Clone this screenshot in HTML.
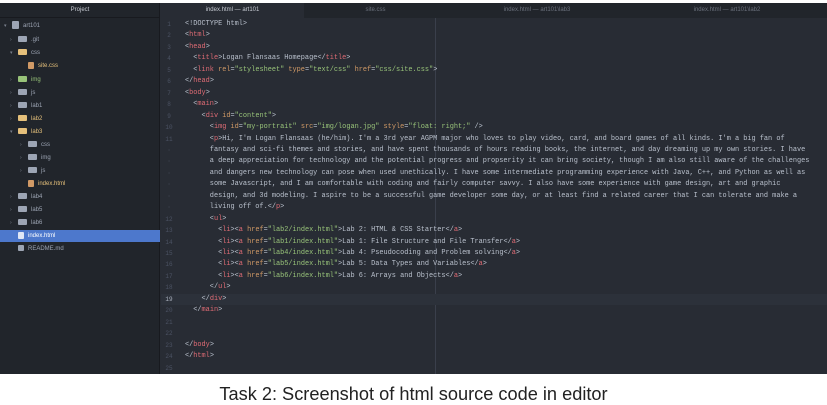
<!DOCTYPE html>
<html><head><meta charset="utf-8"><style>
*{margin:0;padding:0;box-sizing:border-box}
body{width:827px;height:404px;background:#fff;position:relative;overflow:hidden;font-family:"Liberation Sans",sans-serif}
#app{position:absolute;left:0;top:3px;width:827px;height:371px;background:#282c34}
#side{position:absolute;left:0;top:0;width:160px;height:371px;background:#21252b;border-right:1px solid #181a1f}
#tabs{position:absolute;left:161px;top:0;right:0;height:15px;background:#21252b}
.tab{position:absolute;top:0;height:15px;font-size:6px;color:#6b717d;text-align:center;line-height:15px}
.tab.a{background:#282c34;color:#c8ccd4}
.ptitle{position:absolute;left:0;top:0;width:160px;height:15px;line-height:15px;text-align:center;font-size:6px;color:#c8ccd4;border-bottom:1px solid #181a1f}
.it{position:absolute;font-size:6px;color:#9da5b4;height:12px;line-height:12px;white-space:nowrap}
.fd{display:inline-block;width:9px;height:6px;background:#9da5b4;vertical-align:middle;margin-right:4px;border-radius:1px}
.ar{display:inline-block;width:8px;color:#7a818e;font-size:5px}
#sel{position:absolute;left:0;top:227px;width:160px;height:12px;background:#4d78cc}
#code{position:absolute;left:161px;top:16px;right:0;font-family:"Liberation Mono",monospace;font-size:6.9px;color:#b9c0cc}
.l{position:absolute;left:0;height:11.45px;line-height:11.45px;white-space:pre;width:666px}
.n{position:absolute;left:0;width:16px;text-align:center;color:#4b5263;font-size:6px}
.c{position:absolute;left:24px}
.t{color:#e06c75}.a{color:#d19a66}.s{color:#98c379}
#guide{position:absolute;left:435px;top:15px;width:1px;height:356px;background:#3a3f4b}
#cap{position:absolute;left:0;top:384px;width:827px;text-align:center;font-size:18.2px;color:#222}
</style></head><body>
<div id="app">
<div id="side">
<div class="ptitle">Project</div>
<div id="sel"></div>
<div class="it" style="left:4px;top:17px"><span class="ar">▾</span><span class="fd" style="width:7px;height:8px"></span>art101</div>
<div class="it" style="left:10px;top:31px"><span class="ar">›</span><span class="fd"></span>.git</div>
<div class="it" style="left:10px;top:44px"><span class="ar">▾</span><span class="fd" style="background:#e5c07b"></span>css</div>
<div class="it" style="left:28px;top:57px;color:#e5c07b"><span class="fd" style="width:6px;height:7px;background:#d19a66"></span>site.css</div>
<div class="it" style="left:10px;top:71px;color:#98c379"><span class="ar">›</span><span class="fd" style="background:#98c379"></span>img</div>
<div class="it" style="left:10px;top:84px"><span class="ar">›</span><span class="fd"></span>js</div>
<div class="it" style="left:10px;top:97px"><span class="ar">›</span><span class="fd"></span>lab1</div>
<div class="it" style="left:10px;top:110px;color:#e5c07b"><span class="ar">›</span><span class="fd" style="background:#e5c07b"></span>lab2</div>
<div class="it" style="left:10px;top:123px;color:#e5c07b"><span class="ar">▾</span><span class="fd" style="background:#e5c07b"></span>lab3</div>
<div class="it" style="left:20px;top:136px"><span class="ar">›</span><span class="fd"></span>css</div>
<div class="it" style="left:20px;top:149px"><span class="ar">›</span><span class="fd"></span>img</div>
<div class="it" style="left:20px;top:162px"><span class="ar">›</span><span class="fd"></span>js</div>
<div class="it" style="left:28px;top:175px;color:#e5c07b"><span class="fd" style="width:6px;height:7px;background:#d19a66"></span>index.html</div>
<div class="it" style="left:10px;top:188px"><span class="ar">›</span><span class="fd"></span>lab4</div>
<div class="it" style="left:10px;top:201px"><span class="ar">›</span><span class="fd"></span>lab5</div>
<div class="it" style="left:10px;top:214px"><span class="ar">›</span><span class="fd"></span>lab6</div>
<div class="it" style="left:18px;top:227px;color:#fff"><span class="fd" style="width:6px;height:7px;background:#dfe6f5"></span>index.html</div>
<div class="it" style="left:18px;top:240px"><span class="fd" style="width:6px;height:6px"></span>README.md</div>
</div>
<div id="tabs">
<div class="tab a" style="left:0;width:143px">index.html — art101</div>
<div class="tab" style="left:143px;width:143px">site.css</div>
<div class="tab" style="left:286px;width:180px">index.html — art101\lab3</div>
<div class="tab" style="left:466px;width:200px">index.html — art101\lab2</div>
</div>
<div id="guide"></div>
<div id="code">
<div class="l" style="top:0"><span class="n">1</span><span class="c">&lt;!DOCTYPE html&gt;</span></div>
<div class="l" style="top:11.45px"><span class="n">2</span><span class="c">&lt;<span class="t">html</span>&gt;</span></div>
<div class="l" style="top:22.9px"><span class="n">3</span><span class="c">&lt;<span class="t">head</span>&gt;</span></div>
<div class="l" style="top:34.35px"><span class="n">4</span><span class="c">  &lt;<span class="t">title</span>&gt;Logan Flansaas Homepage&lt;/<span class="t">title</span>&gt;</span></div>
<div class="l" style="top:45.8px"><span class="n">5</span><span class="c">  &lt;<span class="t">link</span> <span class="a">rel</span>=<span class="s">"stylesheet"</span> <span class="a">type</span>=<span class="s">"text/css"</span> <span class="a">href</span>=<span class="s">"css/site.css"</span>&gt;</span></div>
<div class="l" style="top:57.25px"><span class="n">6</span><span class="c">&lt;/<span class="t">head</span>&gt;</span></div>
<div class="l" style="top:68.7px"><span class="n">7</span><span class="c">&lt;<span class="t">body</span>&gt;</span></div>
<div class="l" style="top:80.15px"><span class="n">8</span><span class="c">  &lt;<span class="t">main</span>&gt;</span></div>
<div class="l" style="top:91.6px"><span class="n">9</span><span class="c">    &lt;<span class="t">div</span> <span class="a">id</span>=<span class="s">"content"</span>&gt;</span></div>
<div class="l" style="top:103.05px"><span class="n">10</span><span class="c">      &lt;<span class="t">img</span> <span class="a">id</span>=<span class="s">"my-portrait"</span> <span class="a">src</span>=<span class="s">"img/logan.jpg"</span> <span class="a">style</span>=<span class="s">"float: right;"</span> /&gt;</span></div>
<div class="l" style="top:114.5px"><span class="n">11</span><span class="c">      &lt;<span class="t">p</span>&gt;Hi, I'm Logan Flansaas (he/him). I'm a 3rd year AGPM major who loves to play video, card, and board games of all kinds. I'm a big fan of</span></div>
<div class="l" style="top:125.95px"><span class="n">·</span><span class="c">      fantasy and sci-fi themes and stories, and have spent thousands of hours reading books, the internet, and day dreaming up my own stories. I have</span></div>
<div class="l" style="top:137.4px"><span class="n">·</span><span class="c">      a deep appreciation for technology and the potential progress and propserity it can bring society, though I am also still aware of the challenges</span></div>
<div class="l" style="top:148.85px"><span class="n">·</span><span class="c">      and dangers new technology can pose when used unethically. I have some intermediate programming experience with Java, C++, and Python as well as</span></div>
<div class="l" style="top:160.3px"><span class="n">·</span><span class="c">      some Javascript, and I am comfortable with coding and fairly computer savvy. I also have some experience with game design, art and graphic</span></div>
<div class="l" style="top:171.75px"><span class="n">·</span><span class="c">      design, and 3d modeling. I aspire to be a successful game developer some day, or at least find a related career that I can tolerate and make a</span></div>
<div class="l" style="top:183.2px"><span class="n">·</span><span class="c">      living off of.&lt;/<span class="t">p</span>&gt;</span></div>
<div class="l" style="top:194.65px"><span class="n">12</span><span class="c">      &lt;<span class="t">ul</span>&gt;</span></div>
<div class="l" style="top:206.1px"><span class="n">13</span><span class="c">        &lt;<span class="t">li</span>&gt;&lt;<span class="t">a</span> <span class="a">href</span>=<span class="s">"lab2/index.html"</span>&gt;Lab 2: HTML &amp; CSS Starter&lt;/<span class="t">a</span>&gt;</span></div>
<div class="l" style="top:217.55px"><span class="n">14</span><span class="c">        &lt;<span class="t">li</span>&gt;&lt;<span class="t">a</span> <span class="a">href</span>=<span class="s">"lab1/index.html"</span>&gt;Lab 1: File Structure and File Transfer&lt;/<span class="t">a</span>&gt;</span></div>
<div class="l" style="top:229px"><span class="n">15</span><span class="c">        &lt;<span class="t">li</span>&gt;&lt;<span class="t">a</span> <span class="a">href</span>=<span class="s">"lab4/index.html"</span>&gt;Lab 4: Pseudocoding and Problem solving&lt;/<span class="t">a</span>&gt;</span></div>
<div class="l" style="top:240.45px"><span class="n">16</span><span class="c">        &lt;<span class="t">li</span>&gt;&lt;<span class="t">a</span> <span class="a">href</span>=<span class="s">"lab5/index.html"</span>&gt;Lab 5: Data Types and Variables&lt;/<span class="t">a</span>&gt;</span></div>
<div class="l" style="top:251.9px"><span class="n">17</span><span class="c">        &lt;<span class="t">li</span>&gt;&lt;<span class="t">a</span> <span class="a">href</span>=<span class="s">"lab6/index.html"</span>&gt;Lab 6: Arrays and Objects&lt;/<span class="t">a</span>&gt;</span></div>
<div class="l" style="top:263.35px"><span class="n">18</span><span class="c">      &lt;/<span class="t">ul</span>&gt;</span></div>
<div class="l" style="top:274.8px;background:#2c313a"><span class="n" style="color:#abb2bf">19</span><span class="c">    &lt;/<span class="t">div</span>&gt;</span></div>
<div class="l" style="top:286.25px"><span class="n">20</span><span class="c">  &lt;/<span class="t">main</span>&gt;</span></div>
<div class="l" style="top:297.7px"><span class="n">21</span></div>
<div class="l" style="top:309.15px"><span class="n">22</span></div>
<div class="l" style="top:320.6px"><span class="n">23</span><span class="c">&lt;/<span class="t">body</span>&gt;</span></div>
<div class="l" style="top:332.05px"><span class="n">24</span><span class="c">&lt;/<span class="t">html</span>&gt;</span></div>
<div class="l" style="top:343.5px"><span class="n">25</span></div>
</div>
</div>
<div id="cap">Task 2: Screenshot of html source code in editor</div>
</body></html>
